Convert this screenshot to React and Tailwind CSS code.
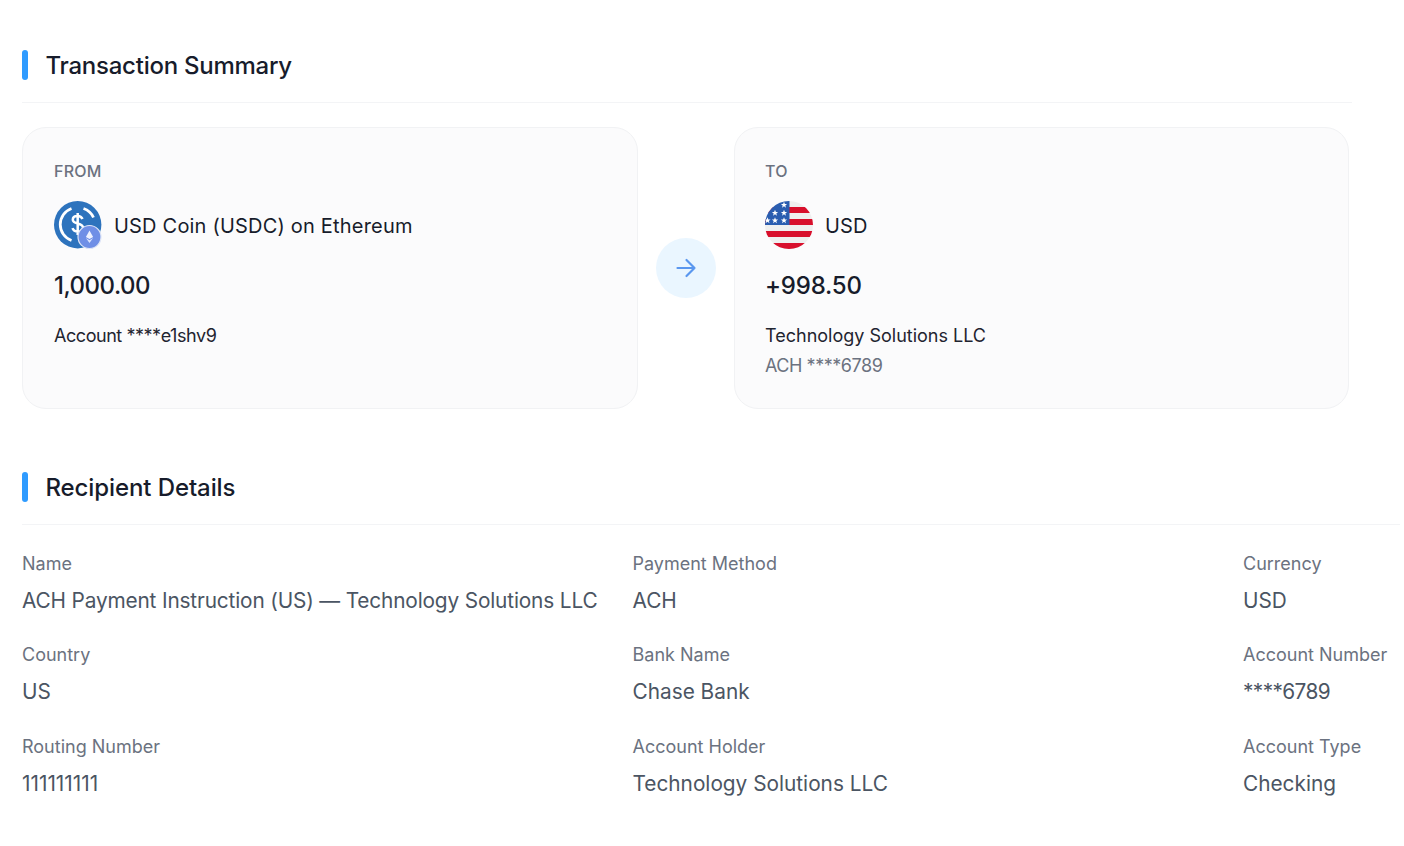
const font = { fontFamily: 'Inter, "Noto Sans", sans-serif' };

function SectionTitle({ children, lineClass, titleClass }) {
  return (
    <div className={`flex items-start gap-[18px] border-b border-[#f3f4f6] h-[54px] pt-[1px] ${lineClass}`}>
      <div className="w-[6px] h-[30px] rounded-[3px] bg-[#2f9bff]" />
      <h2 className={`text-[24px] leading-[32px] font-medium text-[#171c2b] -ml-[0.5px] ${titleClass}`}>{children}</h2>
    </div>
  );
}

function UsdcIcon() {
  return (
    <svg width="48" height="48" viewBox="0 0 48 48" className="shrink-0">
      <circle cx="23.7" cy="23.7" r="23.7" fill="#2d73bd" />
      <path d="M17.500 7.500A17 17 0 0 0 17.500 39.500M29.500 7.500A17 17 0 0 1 39.500 16.500" fill="none" stroke="#fff" strokeWidth="2.800" />
      <path d="M28.500 18c-.8-2-2.700-3-5-3-2.800 0-4.700 1.400-4.700 3.700 0 5 10.200 2.600 10.200 8 0 2.400-2.200 3.900-5 3.900-2.800 0-4.800-1.200-5.500-3.400M23.700 12v22" fill="none" stroke="#fff" strokeWidth="2.500" />
      <circle cx="35.500" cy="36" r="11.500" fill="#6f8fe6" stroke="#dfe6f7" strokeWidth="1.200" />
      <path d="M35.500 29.500l-3.600 6.500 3.600 2.100 3.600-2.100z" fill="#eef2ff" />
      <path d="M35.500 39.300l-3.600-2.200 3.600 5 3.600-5z" fill="#dbe4ff" />
    </svg>
  );
}

function FlagIcon() {
  return (
    <svg width="48" height="48" viewBox="0 0 48 48" className="shrink-0">
      <defs>
        <clipPath id="flagClip"><circle cx="24" cy="24" r="24" /></clipPath>
      </defs>
      <g clipPath="url(#flagClip)">
        <rect width="48" height="48" fill="#efefef" />
        {[6, 18, 30, 42].map((y) => (
          <rect key={y} x="0" y={y} width="48" height="6" fill="#d80f2c" />
        ))}
        <rect x="0" y="0" width="24.500" height="24" fill="#2a5db0" />
        {[[19, 4], [10, 12], [19, 12], [2.500, 19.500], [10, 19.500], [19, 19.500]].map(([x, y]) => (
          <path
            key={`${x}-${y}`}
            transform={`translate(${x} ${y})`}
            d="M0-3.200.9-1 3.100-1 1.300.400 2 2.700 0 1.300-2 2.700-1.300.400-3.100-1-.9-1z"
            fill="#fff"
          />
        ))}
      </g>
    </svg>
  );
}

function Card({ label, icon, title, amount, line1, line2, padClass, amountClass, line1Class, line2Class }) {
  return (
    <div className={`w-[615.500px] h-[282px] shrink-0 rounded-[24px] border border-[#f1f2f4] bg-[#fbfbfc] pt-[33px] ${padClass}`}>
      <div className="text-[16px] leading-[20px] font-medium text-[#6b7280] tracking-[0.2px]">{label}</div>
      <div className="flex items-center gap-[12px] mt-[20px] h-[48px]">
        {icon}
        <span className="text-[20px] leading-[28px] pt-[1px] font-normal text-[#171c2b] tracking-[0.2px]">{title}</span>
      </div>
      <div className={`mt-[21px] text-[24px] leading-[32px] font-medium text-[#171c2b] ${amountClass}`}>{amount}</div>
      <div className={`mt-[19px] text-[18px] leading-[30px] text-[#1f2430] ${line1Class}`}>{line1}</div>
      {line2 && <div className={`text-[18px] leading-[30px] text-[#6b7280] ${line2Class}`}>{line2}</div>}
    </div>
  );
}

function Field({ label, value, valueClass = "" }) {
  return (
    <div className="h-[91.400px]">
      <div className="text-[18px] leading-[26px] text-[#6b7280]">{label}</div>
      <div className={`mt-[9px] text-[20.800px] leading-[30px] text-[#4b5563] whitespace-nowrap ${valueClass}`}>{value}</div>
    </div>
  );
}

export default function App() {
  return (
    <div style={font} className="w-[1404px] h-[846px] overflow-hidden bg-white pl-[22px] pt-[49px]">
      <SectionTitle lineClass="w-[1330px]" titleClass="tracking-[-0.25px]">Transaction Summary</SectionTitle>
      <div className="flex items-center mt-[24px]">
        <Card
          label="FROM"
          icon={<UsdcIcon />}
          title="USD Coin (USDC) on Ethereum"
          padClass="pl-[31px]"
          amount="1,000.00"
          amountClass="tracking-[-0.5px]"
          line1="Account ****e1shv9"
          line1Class="tracking-[-0.45px]"
        />
        <div className="w-[96px] shrink-0 flex justify-center">
          <div className="w-[60px] h-[60px] rounded-full bg-[#eaf6ff] flex items-center justify-center">
            <svg width="24" height="24" viewBox="0 0 24 24" fill="none" stroke="#5a97ef" strokeWidth="2.200" strokeLinecap="round" strokeLinejoin="round">
              <path d="M3.500 12H20.500M12.500 4L20.500 12L12.500 20" />
            </svg>
          </div>
        </div>
        <Card
          label="TO"
          icon={<FlagIcon />}
          title="USD"
          padClass="pl-[30.500px]"
          amount="+998.50"
          amountClass="tracking-[-0.2px]"
          line1="Technology Solutions LLC"
          line2="ACH ****6789"
          line2Class="tracking-[-0.45px]"
        />
      </div>
      <div className="mt-[62px]">
        <SectionTitle lineClass="w-[1378px]" titleClass="tracking-[-0.1px]">Recipient Details</SectionTitle>
      </div>
      <div className="grid grid-cols-[610.500px_610.500px_161px] mt-[26px]">
        <Field label="Name" value="ACH Payment Instruction (US) — Technology Solutions LLC" valueClass="tracking-[-0.15px]" />
        <Field label="Payment Method" value="ACH" />
        <Field label="Currency" value="USD" />
        <Field label="Country" value="US" />
        <Field label="Bank Name" value="Chase Bank" />
        <Field label="Account Number" value="****6789" valueClass="tracking-[-0.6px]" />
        <Field label="Routing Number" value="111111111" />
        <Field label="Account Holder" value="Technology Solutions LLC" />
        <Field label="Account Type" value="Checking" />
      </div>
    </div>
  );
}
